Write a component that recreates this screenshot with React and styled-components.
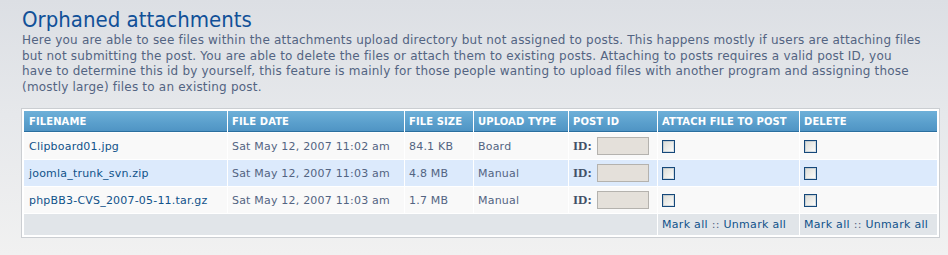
import React from "react";
import styled, { createGlobalStyle } from "styled-components";

const GlobalStyle = createGlobalStyle`
  html, body {
    margin: 0;
    padding: 0;
  }
  body {
    width: 948px;
    height: 255px;
    overflow: hidden;
    background: linear-gradient(to bottom, #dcdfe4 0%, #e6e8eb 45%, #f1f1f1 100%);
    font-family: "DejaVu Sans", Verdana, sans-serif;
  }
`;

const files = [
  { name: "Clipboard01.jpg", date: "Sat May 12, 2007 11:02 am", size: "84.1 KB", type: "Board" },
  { name: "joomla_trunk_svn.zip", date: "Sat May 12, 2007 11:03 am", size: "4.8 MB", type: "Manual" },
  { name: "phpBB3-CVS_2007-05-11.tar.gz", date: "Sat May 12, 2007 11:03 am", size: "1.7 MB", type: "Manual" },
];

const columns = [
  { label: "Filename", width: 203 },
  { label: "File date", width: 176 },
  { label: "File size", width: 68 },
  { label: "Upload type", width: 94 },
  { label: "Post ID", width: 88 },
  { label: "Attach file to post", width: 141 },
  { label: "Delete", width: 137 },
];

const introLines = [
  "Here you are able to see files within the attachments upload directory but not assigned to posts. This happens mostly if users are attaching files",
  "but not submitting the post. You are able to delete the files or attach them to existing posts. Attaching to posts requires a valid post ID, you",
  "have to determine this id by yourself, this feature is mainly for those people wanting to upload files with another program and assigning those",
  "(mostly large) files to an existing post.",
];

export default function App() {
  return (
    <Page>
      <GlobalStyle />
      <Title>Orphaned attachments</Title>
      <Intro>
        {introLines.map((line, i) => (
          <React.Fragment key={i}>
            {line}
            {i < introLines.length - 1 && <br />}
          </React.Fragment>
        ))}
      </Intro>
      <TableBox>
        <Table>
          <colgroup>
            {columns.map((c) => (
              <Col key={c.label} $w={c.width} />
            ))}
          </colgroup>
          <thead>
            <tr>
              {columns.map((c) => (
                <Th key={c.label}>{c.label}</Th>
              ))}
            </tr>
          </thead>
          <tbody>
            {files.map((f, i) => (
              <Row key={f.name} $alt={i % 2 === 1}>
                <Td>
                  <FileLink href="#">{f.name}</FileLink>
                </Td>
                <Td>{f.date}</Td>
                <Td>{f.size}</Td>
                <Td>{f.type}</Td>
                <Td>
                  <IdField>
                    <IdLabel>ID:</IdLabel>
                    <IdInput type="text" />
                  </IdField>
                </Td>
                <Td>
                  <Check type="checkbox" />
                </Td>
                <Td>
                  <Check type="checkbox" />
                </Td>
              </Row>
            ))}
            <FooterRow>
              <Td colSpan={5} />
              <Td>
                <MarkLink href="#">Mark all</MarkLink> <Sep>::</Sep> <MarkLink href="#">Unmark all</MarkLink>
              </Td>
              <Td>
                <MarkLink href="#">Mark all</MarkLink> <Sep>::</Sep> <MarkLink href="#">Unmark all</MarkLink>
              </Td>
            </FooterRow>
          </tbody>
        </Table>
      </TableBox>
    </Page>
  );
}

const Page = styled.div`
  padding: 6px 8px 0 22px;
`;

const Title = styled.h1`
  margin: 0;
  font-family: "DejaVu Sans Condensed", "DejaVu Sans", sans-serif;
  font-size: 22px;
  font-weight: normal;
  line-height: 27px;
  color: #115098;
`;

const Intro = styled.p`
  margin: 0;
  width: 930px;
  white-space: nowrap;
  font-size: 12px;
  letter-spacing: 0.2px;
  line-height: 15.5px;
  color: #536482;
`;

const TableBox = styled.div`
  margin-top: 13px;
  margin-left: -1px;
  width: 915px;
  padding: 1px;
  border: 1px solid #cbced2;
  background: #ffffff;
`;

const Table = styled.table`
  width: 915px;
  table-layout: fixed;
  border-collapse: separate;
  border-spacing: 1px;
  font-size: 11px;
  letter-spacing: 0.2px;
  color: #536482;
`;

const Col = styled.col`
  width: ${(p) => p.$w}px;
`;

const Th = styled.th`
  height: 20px;
  padding: 0 4px;
  text-align: left;
  font-size: 10px;
  font-weight: bold;
  letter-spacing: 0.1px;
  text-transform: uppercase;
  color: #ffffff;
  background: linear-gradient(to bottom, #6eb0d8 0%, #5a9fcc 60%, #4f94c4 100%);
  border-bottom: 1px solid #2b6f9f;
  white-space: nowrap;
  overflow: hidden;

  &:first-child {
    padding-left: 5px;
  }
`;

const Row = styled.tr`
  background: ${(p) => (p.$alt ? "#dceafc" : "#f9f9f9")};
`;

const FooterRow = styled.tr`
  background: #e1e5e9;

  td {
    height: 21px;
    letter-spacing: 0.3px;
  }
`;

const Td = styled.td`
  height: 26px;
  padding: 0 4px;
  vertical-align: middle;
  white-space: nowrap;

  &:first-child {
    padding-left: 5px;
  }
`;

const FileLink = styled.a`
  color: #105289;
  text-decoration: none;
`;

const IdField = styled.span`
  display: flex;
  align-items: center;
  gap: 5px;
`;

const IdLabel = styled.span`
  font-family: "Liberation Serif", "Times New Roman", serif;
  font-weight: bold;
  font-size: 13px;
  letter-spacing: 0;
  color: #425067;
`;

const IdInput = styled.input`
  box-sizing: border-box;
  width: 52px;
  height: 18px;
  margin: 0;
  padding: 0;
  border: 1px solid #b4b2ae;
  background: #e4e0da;
`;

const Check = styled.input`
  appearance: none;
  box-sizing: border-box;
  display: block;
  width: 13px;
  height: 13px;
  margin: 0;
  border: 1px solid #15487a;
  box-shadow: inset 0 0 0 1px rgba(21, 72, 122, 0.15);
  background: linear-gradient(135deg, #dcdcd6 0%, #f3f3f0 70%, #ffffff 100%);
`;

const MarkLink = styled.a`
  color: #105289;
  text-decoration: none;
`;

const Sep = styled.span`
  color: #536482;
`;
